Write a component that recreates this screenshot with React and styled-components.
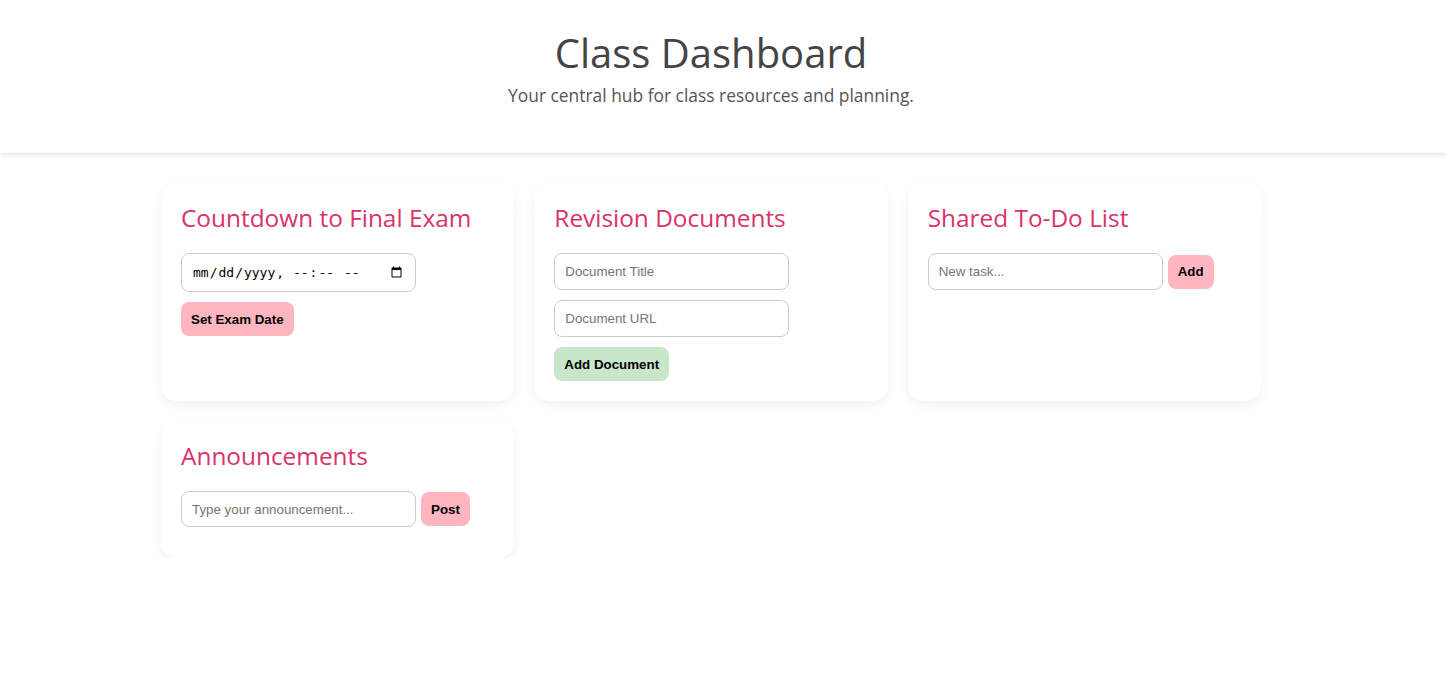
import React from 'react'
import styled, { createGlobalStyle } from 'styled-components'

const GlobalStyle = createGlobalStyle`
  body {
    margin: 0;
    background: #ffffff;
    font-family: "Open Sans", "Noto Sans", sans-serif;
  }
`

const Page = styled.div`
  padding-right: 24px;
`

const Header = styled.header`
  background: #fff;
  height: 153px;
  box-sizing: border-box;
  padding-top: 28px;
  text-align: center;
  box-shadow: 0 2px 4px rgba(0, 0, 0, 0.1);
  margin-right: -24px;
  padding-right: 24px;
  h1 {
    margin: 0;
    font-size: 40px;
    font-weight: 500;
    color: #444;
    line-height: 50px;
  }
  p {
    margin: 5px 0 0;
    font-size: 17.4px;
    color: #555;
  }
`

const Grid = styled.main`
  max-width: 1100px;
  margin: 30px auto 0;
  display: grid;
  grid-template-columns: repeat(3, 1fr);
  gap: 20px;
`

const Card = styled.section`
  background: #fff;
  border-radius: 15px;
  padding: 20px;
  box-shadow: 0 4px 12px rgba(0, 0, 0, 0.06);
  h2 {
    margin: 0 0 20px;
    font-size: 24.4px;
    line-height: 30px;
    font-weight: 500;
    color: #d8336a;
  }
`

const Input = styled.input`
  display: block;
  box-sizing: border-box;
  width: 235px;
  height: ${p => p.$h || 37}px;
  padding: 0 10px;
  border: 1px solid #ccc;
  border-radius: 8px;
  font-family: "Liberation Sans", Arial, sans-serif;
  font-size: 13.33px;
  color: #333;
  margin-bottom: 10px;
  &::placeholder {
    color: #757575;
  }
`

const DateInput = styled(Input)`
  font-family: "DejaVu Sans Mono", monospace;
  font-size: 13px;
  color: #000;
`

const Button = styled.button`
  display: block;
  height: 34px;
  padding: 0 10px;
  border: none;
  border-radius: 8px;
  background: ${p => (p.$green ? '#c8e6c9' : '#ffb6c1')};
  font-family: "Liberation Sans", Arial, sans-serif;
  font-weight: 700;
  font-size: 13.33px;
  color: #000;
  cursor: pointer;
`

const Row = styled.div`
  display: flex;
  align-items: center;
  gap: 5px;
  margin-bottom: ${p => p.$mb || 0}px;
  ${Input} {
    margin-bottom: 0;
  }
`

export default function App() {
  return (
    <Page>
      <GlobalStyle />
      <Header>
        <h1>Class Dashboard</h1>
        <p>Your central hub for class resources and planning.</p>
      </Header>
      <Grid>
        <Card>
          <h2>Countdown to Final Exam</h2>
          <DateInput type="datetime-local" $h={39} />
          <Button>Set Exam Date</Button>
        </Card>
        <Card>
          <h2>Revision Documents</h2>
          <Input placeholder="Document Title" />
          <Input placeholder="Document URL" />
          <Button $green>Add Document</Button>
        </Card>
        <Card>
          <h2>Shared To-Do List</h2>
          <Row>
            <Input placeholder="New task..." />
            <Button>Add</Button>
          </Row>
        </Card>
        <Card>
          <h2>Announcements</h2>
          <Row $mb={11}>
            <Input placeholder="Type your announcement..." $h={36} />
            <Button>Post</Button>
          </Row>
        </Card>
      </Grid>
    </Page>
  )
}
